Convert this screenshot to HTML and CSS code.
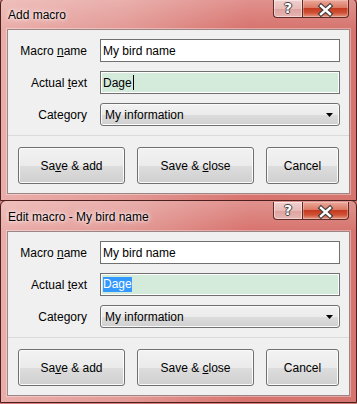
FILE: index.html
```html
<!DOCTYPE html>
<html>
  <head>
    <title>Macros</title>
    <link rel="stylesheet" href="styles.css">
  </head>
  <body>
    <div class="win first">
      <div class="titlebar">
        <span class="title">Add macro</span>
        <div class="caption">
          <span class="cbtn help">?</span>
          <span class="cbtn close">
            <svg width="45" height="17" viewBox="0 0 45 17"><path d="M18 6 L27 14 M27 6 L18 14" stroke="#3b3b3b" stroke-width="4.6" stroke-linecap="square"/><path d="M18 6 L27 14 M27 6 L18 14" stroke="#fff" stroke-width="2.4" stroke-linecap="square"/></svg>
          </span>
        </div>
      </div>
      <div class="client">
        <div class="form">
          <label>Macro <u>n</u>ame</label>
          <div class="field">My bird name</div>
          <label>Actual <u>t</u>ext</label>
          <div class="field green">Dage<span class="caret"></span></div>
          <label>Cate<u>g</u>ory</label>
          <div class="combo"><span>My information</span><svg width="7" height="4" viewBox="0 0 7 4"><path d="M0 0 H7 L3.5 4 Z" fill="#000"/></svg></div>
        </div>
        <div class="sep"></div>
        <div class="buttons">
          <div class="btn add"><span>Sa<u>v</u>e &amp; add</span></div>
          <div class="btn saveclose"><span>Save &amp; <u>c</u>lose</span></div>
          <div class="btn cancel"><span>Cancel</span></div>
        </div>
      </div>
    </div>

    <div class="win">
      <div class="titlebar">
        <span class="title">Edit macro - My bird name</span>
        <div class="caption">
          <span class="cbtn help">?</span>
          <span class="cbtn close">
            <svg width="45" height="17" viewBox="0 0 45 17"><path d="M18 6 L27 14 M27 6 L18 14" stroke="#3b3b3b" stroke-width="4.6" stroke-linecap="square"/><path d="M18 6 L27 14 M27 6 L18 14" stroke="#fff" stroke-width="2.4" stroke-linecap="square"/></svg>
          </span>
        </div>
      </div>
      <div class="client">
        <div class="form">
          <label>Macro <u>n</u>ame</label>
          <div class="field">My bird name</div>
          <label>Actual <u>t</u>ext</label>
          <div class="field green"><span class="selected">Dage</span></div>
          <label>Cate<u>g</u>ory</label>
          <div class="combo"><span>My information</span><svg width="7" height="4" viewBox="0 0 7 4"><path d="M0 0 H7 L3.5 4 Z" fill="#000"/></svg></div>
        </div>
        <div class="sep"></div>
        <div class="buttons">
          <div class="btn add"><span>Sa<u>v</u>e &amp; add</span></div>
          <div class="btn saveclose"><span>Save &amp; <u>c</u>lose</span></div>
          <div class="btn cancel"><span>Cancel</span></div>
        </div>
      </div>
    </div>
  </body>
</html>
```

FILE: styles.css
```css
body { margin: 0; font-family: "Segoe UI", "Liberation Sans", Arial, sans-serif; font-size: 12px; color: #000; background: #d9807c; overflow: hidden; }

.win { box-sizing: border-box; width: 357px; height: 203px; border: 1px solid #4a1f1d; border-radius: 6px 6px 0 0; padding: 0 6px 6px; display: flex; flex-direction: column;
  background: linear-gradient(180deg, rgba(255,255,255,.22) 0, rgba(255,255,255,0) 30px),
              linear-gradient(90deg, #eaaeaa 0%, #e39a96 35%, #d8736e 70%, #d6756f 100%); }
.win.first { margin-top: -2px; }
.win + .win { margin-top: -1px; }

.titlebar { height: 30px; display: flex; flex-shrink: 0; }
.title { align-self: center; margin-top: 2px; padding-left: 1px; text-shadow: 0 0 6px #fff, 0 0 3px rgba(255,255,255,.9); }
.caption { margin-left: auto; margin-right: 1px; margin-top: 1px; display: flex; height: 18px; }
.cbtn { box-sizing: border-box; height: 18px; border: 1px solid #5e2b28; border-top: none; display: flex; justify-content: center; }
.help { width: 29px; border-right: none; border-radius: 0 0 0 4px; background: linear-gradient(#f0cfcd 0%, #e9bcb9 50%, #dea29e 51%, #e6b6b3 100%); box-shadow: inset 0 0 0 1px rgba(255,255,255,.45);
  color: #fff; font-weight: bold; font-size: 14px; line-height: 17px; font-family: "DejaVu Sans", sans-serif;
  text-shadow: 1px 0 0 #444, -1px 0 0 #444, 0 1px 0 #444, 0 -1px 0 #444; }
.close { width: 47px; border-radius: 0 0 4px 0; background: linear-gradient(#eaa99d 0%, #dc7a64 45%, #c53b20 50%, #cf5033 75%, #e49a86 100%); box-shadow: inset 0 0 0 1px rgba(255,220,210,.35); }

.client { box-sizing: border-box; height: 165px; background: #f0f0f0; border: 1px solid #9c8584; box-shadow: 0 0 0 1px rgba(255,255,255,.35); }

.form { display: grid; grid-template-columns: 79px 240px; column-gap: 13px; row-gap: 9px; padding: 9px 9px 0 0; }
.form label { text-align: right; align-self: center; }
.field { box-sizing: border-box; height: 23px; border: 1px solid #707070; background: #fff; padding-left: 2px; display: flex; align-items: center; white-space: nowrap; }
.field.green { background: #d4ebdc; box-shadow: inset 0 0 0 1px #fff; }
.caret { display: inline-block; width: 1px; height: 15px; background: #000; margin-left: 1px; }
.selected { background: #3399ff; color: #fff; line-height: 15px; }

.combo { box-sizing: border-box; height: 23px; border: 1px solid #707070; border-radius: 3px; display: flex; align-items: center; justify-content: space-between; padding: 0 6px 0 4px;
  background: linear-gradient(#f2f2f2 0%, #ebebeb 50%, #dddddd 51%, #cfcfcf 100%); box-shadow: inset 0 0 0 1px #fbfbfb; }

.sep { height: 1px; background: #dadada; margin-top: 9px; }

.buttons { display: flex; gap: 12px; padding: 11px 10px 0; }
.btn { box-sizing: border-box; height: 37px; border: 1px solid #707070; border-radius: 3px; display: flex; align-items: center; justify-content: center;
  background: linear-gradient(#f2f2f2 0%, #ebebeb 50%, #dddddd 51%, #cfcfcf 100%); box-shadow: inset 0 0 0 1px #fbfbfb; }
.add { width: 107px; }
.saveclose { width: 117px; }
.cancel { width: 73px; }
```
